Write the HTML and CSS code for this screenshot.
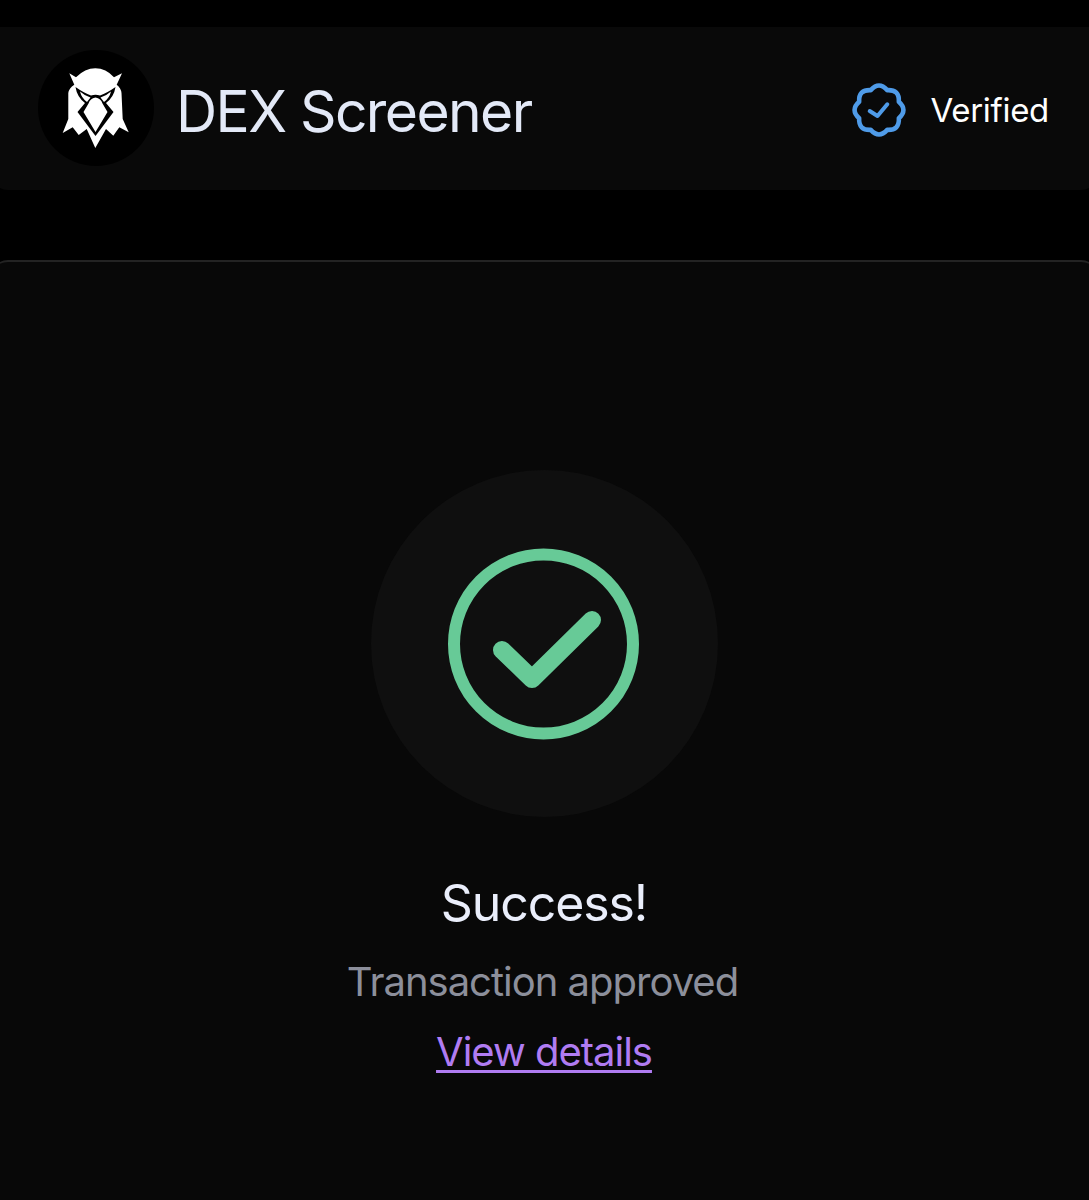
FILE: index.html
```html
<!DOCTYPE html>
<html lang="en">
<head>
  <meta charset="UTF-8" />
  <meta name="viewport" content="width=device-width, initial-scale=1.0" />
  <title>Transaction approved</title>
  <link rel="stylesheet" href="styles.css">
</head>
<body>
  <header class="site-card">
    <div class="site">
      <svg class="site-logo" viewBox="38 50 116 116" aria-hidden="true">
        <circle cx="96" cy="108" r="58" fill="#000" />
        <path fill="#fff" d="M69.3 73.3 L76 77.3 Q85 68.3 95.3 68.3 Q106 68.3 114 77.3 L122 73.3 L116.7 84.7 Q121 88 121.5 93 L122.7 119 L128.7 132.3 L119.3 127.3 L113.3 135.7 L106 129 L95.3 148 L86.7 129 L78.7 135 L72.7 127.3 L62.7 133 L68.3 119 L68.3 93 Q69 88 74.3 84.7 Z" />
        <path fill="#000" d="M75.5 87 Q84 93 91 95.5 Q95.5 94 100 95.5 Q107 93 115.5 87 Q114 97 106 103 L113.5 112 L95.5 136 L77.5 112 L85 103 Q77 97 75.5 87 Z" />
        <path fill="#fff" d="M80 91.5 Q85 96 90.5 97.5 L87 102 Q81.5 98 80 91.5 Z M111 91.5 Q106 96 100.5 97.5 L104 102 Q109.5 98 111 91.5 Z" />
        <path fill="#fff" d="M95.5 97.5 Q101 98.5 102.5 103.5 L107.5 112 L95.5 132 L83.5 112 L88.5 103.5 Q90 98.5 95.5 97.5 Z" />
      </svg>
      <span class="site-name">DEX Screener</span>
    </div>
    <div class="verified">
      <svg class="verified-icon" viewBox="0 0 54 54" aria-hidden="true">
        <path fill="none" stroke="#4f9be8" stroke-width="4.6" stroke-linejoin="round" d="M18.77 7.14 Q27 -2 35.23 7.14 Q47.5 6.5 46.86 18.77 Q56 27 46.86 35.23 Q47.5 47.5 35.23 46.86 Q27 56 18.77 46.86 Q6.5 47.5 7.14 35.23 Q-2 27 7.14 18.77 Q6.5 6.5 18.77 7.14 Z" />
        <path fill="none" stroke="#4f9be8" stroke-width="4" stroke-linecap="round" stroke-linejoin="round" d="M17.7 28 L25.5 33 L35.3 21.3" />
      </svg>
      <span class="verified-label">Verified</span>
    </div>
  </header>

  <main class="result-card">
    <div class="status-circle">
      <svg class="status-icon" viewBox="0 0 192 192" aria-hidden="true">
        <circle cx="95.5" cy="96" r="89.5" fill="none" stroke="#67ca97" stroke-width="12" />
        <path fill="none" stroke="#67ca97" stroke-width="18" stroke-linecap="round" stroke-linejoin="round" d="M54 102 L84 131 L144 72" />
      </svg>
    </div>
    <h1 class="status-title">Success!</h1>
    <p class="status-text">Transaction approved</p>
    <a class="status-link" href="#">View details</a>
  </main>
</body>
</html>
```

FILE: styles.css
```css
html, body {
  margin: 0;
  height: 1200px;
  overflow: hidden;
  background-color: #000;
}
body {
  font-family: Inter, "Liberation Sans", sans-serif;
  padding-top: 27px;
  box-sizing: border-box;
}
.site-card {
  height: 163px;
  box-sizing: border-box;
  margin: 0 -8px 70px;
  padding: 0 48px 0 46px;
  display: flex;
  align-items: center;
  justify-content: space-between;
  background-color: #090909;
  border-radius: 0 0 16px 16px;
}
.site {
  display: flex;
  align-items: center;
  gap: 22px;
}
.site-logo {
  width: 116px;
  height: 116px;
  margin-top: -1px;
}
.site-name {
  margin-top: 6px;
  font-size: 57px;
  color: #e3e9f7;
  letter-spacing: -1.6px;
}
.verified {
  display: flex;
  align-items: center;
  gap: 24px;
}
.verified-icon {
  width: 54px;
  height: 54px;
  margin-top: 2px;
}
.verified-label {
  margin-top: 3px;
  font-size: 33px;
  letter-spacing: -0.3px;
  color: #fff;
}
.result-card {
  height: 942px;
  box-sizing: border-box;
  margin: 0 -8px;
  padding: 208px 1px 0 0;
  display: flex;
  flex-direction: column;
  align-items: center;
  background-color: #080808;
  border-top: 2px solid #232323;
  border-radius: 16px 16px 0 0;
}
.status-circle {
  width: 347px;
  height: 347px;
  border-radius: 50%;
  background-color: #0f0f0f;
  display: flex;
  align-items: center;
  justify-content: center;
}
.status-icon {
  width: 192px;
  height: 192px;
}
.status-title {
  margin: 56px 0 0;
  font-size: 50px;
  line-height: 60px;
  font-weight: 400;
  letter-spacing: -1.1px;
  color: #eaeefb;
}
.status-text {
  margin: 25px 3px 0 0;
  font-size: 40px;
  line-height: 48px;
  letter-spacing: -1px;
  color: #8c8f9b;
}
.status-link {
  margin-top: 22px;
  font-size: 40px;
  line-height: 48px;
  letter-spacing: -1px;
  color: #b07cf2;
  text-decoration-thickness: 2.5px;
  text-underline-offset: 4px;
}
```
